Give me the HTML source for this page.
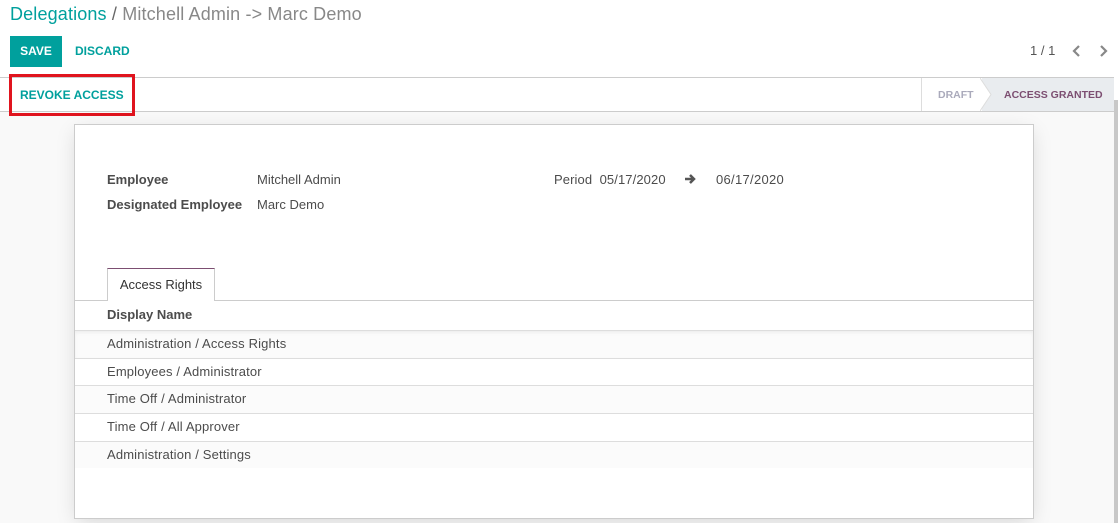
<!DOCTYPE html>
<html><head><meta charset="utf-8"><style>
*{box-sizing:border-box;margin:0;padding:0}
body{width:1118px;height:523px;overflow:hidden;background:#fff;font-family:"Liberation Sans",sans-serif;font-size:13px;color:#4c4c4c;position:relative}
.abs{position:absolute}
.teal{color:#00A09D}
</style></head><body>
<div class="abs" style="left:10px;top:4px;font-size:18px;white-space:nowrap;letter-spacing:0.15px"><span class="teal">Delegations</span> <span style="color:#666">/</span> <span style="color:#888">Mitchell Admin -&gt; Marc Demo</span></div>
<div class="abs" style="left:10px;top:36px;width:52px;height:31px;background:#00A09D;color:#fff;font-weight:bold;font-size:12px;line-height:31px;text-align:center">SAVE</div>
<div class="abs teal" style="left:75px;top:36px;font-weight:bold;font-size:12px;line-height:31px">DISCARD</div>
<div class="abs" style="left:1030px;top:43px;font-size:13px;color:#555">1 / 1</div>
<svg class="abs" style="left:1071px;top:44px" width="12" height="14"><path d="M8 2L3 7l5 5" stroke="#888" stroke-width="2.2" fill="none"/></svg>
<svg class="abs" style="left:1098px;top:44px" width="12" height="14"><path d="M3 2l5 5-5 5" stroke="#888" stroke-width="2.2" fill="none"/></svg>
<div class="abs" style="left:0;top:77px;width:1114px;height:35px;border-top:1px solid #ccc;border-bottom:1px solid #ccc;background:#fff"></div>
<div class="abs" style="left:921px;top:78px;width:193px;height:33px;background:#e9ecef;border-left:1px solid #ddd"></div>
<div class="abs" style="left:922px;top:78px;width:60px;height:33px;background:#fff"></div>
<svg class="abs" style="left:980px;top:78px" width="12" height="33"><path d="M0 0L11 16.5 0 33Z" fill="#fff"/><path d="M0 0L11 16.5 0 33" stroke="#ddd" fill="none"/></svg>
<div class="abs" style="left:938px;top:89px;font-size:10.5px;font-weight:bold;color:#aab">DRAFT</div>
<div class="abs" style="left:1004px;top:89px;font-size:10.5px;font-weight:bold;color:#7C4E71">ACCESS GRANTED</div>
<div class="abs" style="left:0;top:112px;width:1114px;height:411px;background:#f9f9f9"></div>
<div class="abs" style="left:9px;top:74px;width:126px;height:42px;border:3px solid #e0141e"></div>
<div class="abs teal" style="left:20px;top:88px;font-size:12px;font-weight:bold">REVOKE ACCESS</div>
<div class="abs" style="left:1114px;top:100px;width:4px;height:423px;background:#c8c8c8"></div>
<div class="abs" style="left:74px;top:124px;width:960px;height:395px;background:#fff;border:1px solid #ccc;box-shadow:0 5px 20px -3px rgba(0,0,0,.15)"></div>
<div class="abs" style="left:107px;top:172px;font-weight:bold">Employee</div>
<div class="abs" style="left:107px;top:197px;font-weight:bold">Designated Employee</div>
<div class="abs" style="left:257px;top:172px">Mitchell Admin</div>
<div class="abs" style="left:257px;top:197px">Marc Demo</div>
<div class="abs" style="left:554px;top:172px;letter-spacing:0.1px">Period&nbsp; 05/17/2020</div>
<svg class="abs" style="left:684px;top:172px" width="14" height="14"><path d="M1 7h9M6 3l4 4-4 4" stroke="#555" stroke-width="2.5" fill="none"/></svg>
<div class="abs" style="left:716px;top:172px;letter-spacing:0.3px">06/17/2020</div>
<div class="abs" style="left:75px;top:300px;width:958px;height:1px;background:#ccc"></div>
<div class="abs" style="left:107px;top:268px;width:108px;height:33px;background:#fff;border:1px solid #ccc;border-top:1px solid #7C4E71;border-bottom:none;text-align:center;line-height:32px;color:#333">Access Rights</div>
<div class="abs" style="left:107px;top:307px;font-weight:bold">Display Name</div>
<div class="abs" style="left:75px;top:330px;width:958px;height:138px;letter-spacing:0.15px">
<div style="height:28px;background:#fbfbfb;border-top:1px solid #ddd;box-shadow:inset 0 2px 3px rgba(0,0,0,.05);padding:5px 32px">Administration / Access Rights</div>
<div style="height:27px;border-top:1px solid #ddd;padding:5px 32px">Employees / Administrator</div>
<div style="height:28px;background:#fbfbfb;border-top:1px solid #ddd;padding:5px 32px">Time Off / Administrator</div>
<div style="height:28px;border-top:1px solid #ddd;padding:5px 32px">Time Off / All Approver</div>
<div style="height:27px;background:#fbfbfb;border-top:1px solid #ddd;padding:5px 32px">Administration / Settings</div>
</div>
</body></html>
